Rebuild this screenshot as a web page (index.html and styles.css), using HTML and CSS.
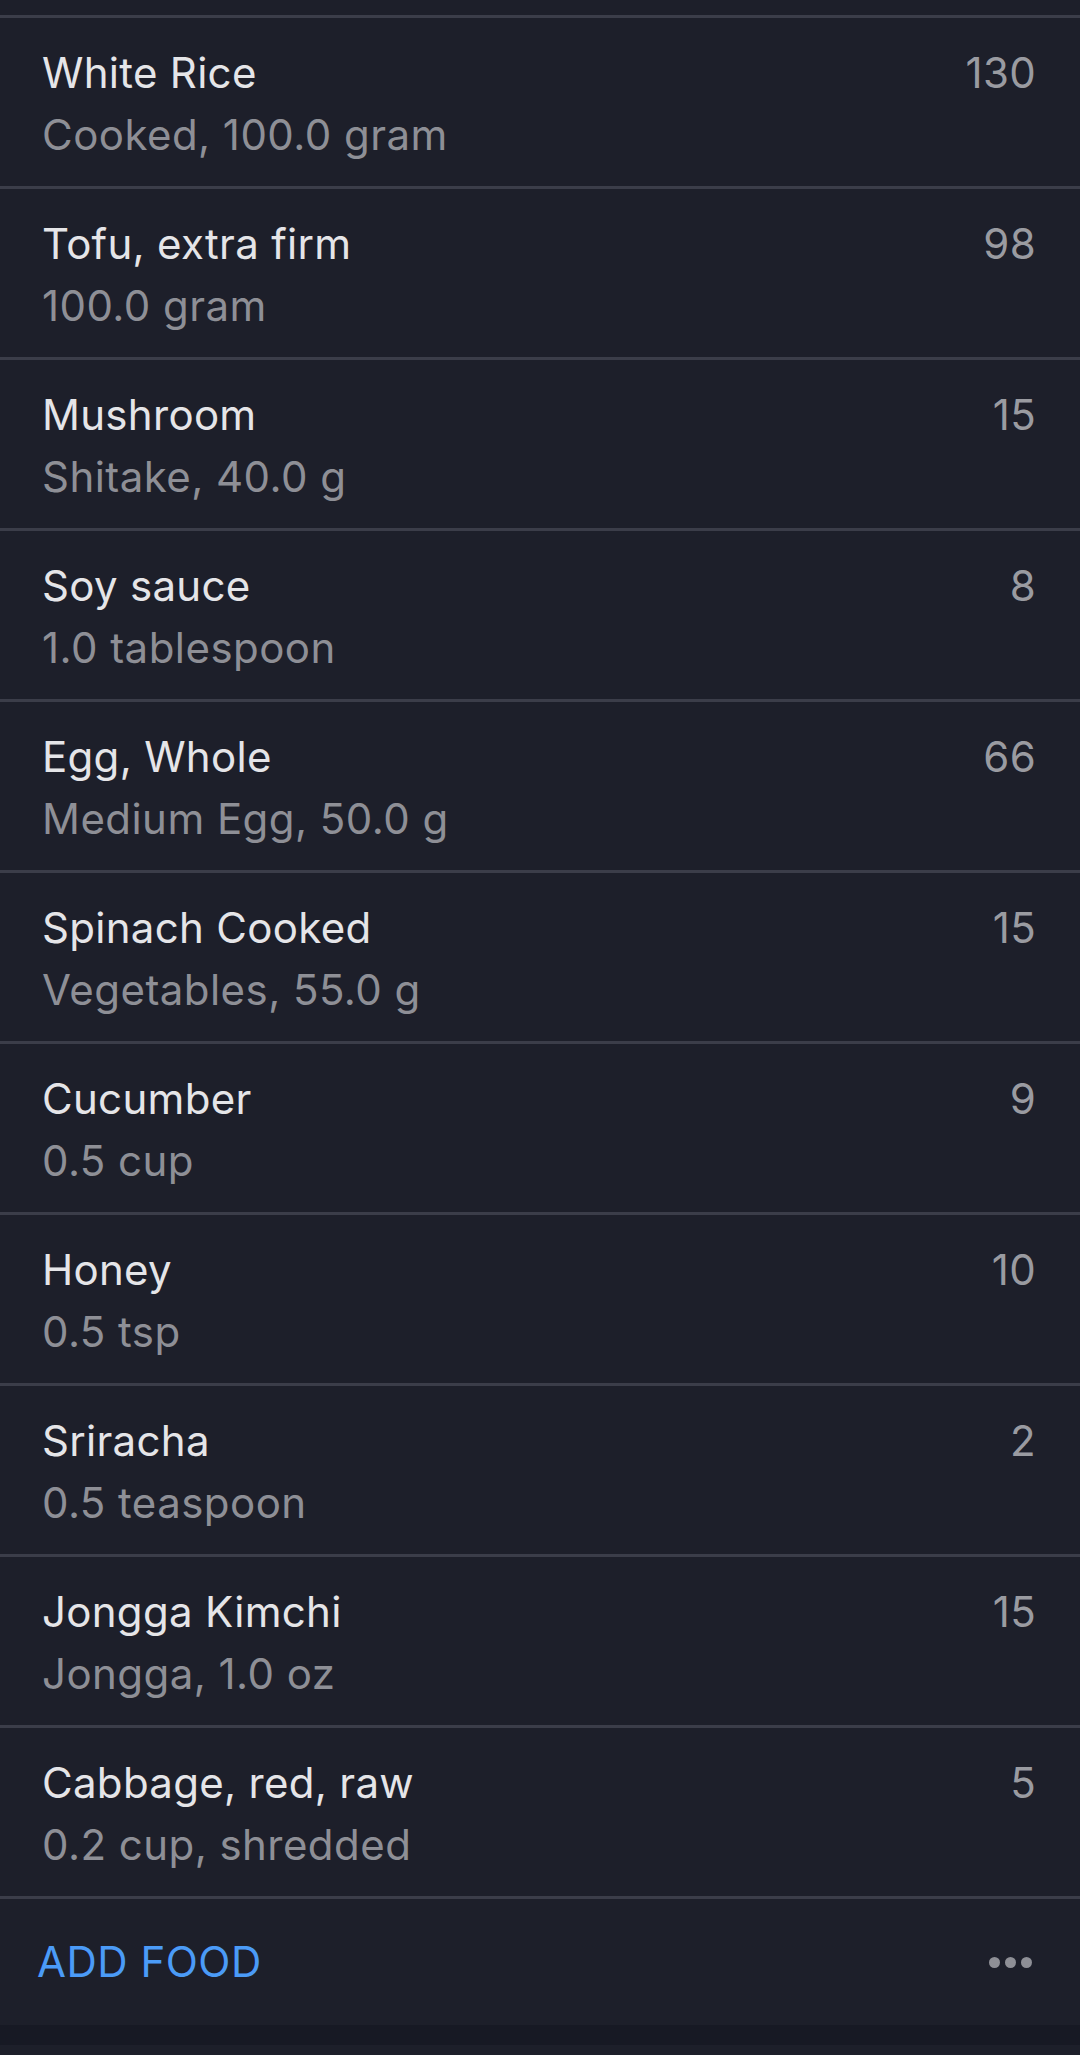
FILE: index.html
```html
<!DOCTYPE html>
<html lang="en">
<head>
<meta charset="utf-8">
<link rel="stylesheet" href="styles.css">
</head>
<body>
<div class="screen">
  <div class="top-space"></div>
  <ul class="food-list">
    <li class="food-row"><div class="food-info"><div class="food-name">White Rice</div><div class="food-detail">Cooked, 100.0 gram</div></div><div class="food-cal">130</div></li>
    <li class="food-row"><div class="food-info"><div class="food-name">Tofu, extra firm</div><div class="food-detail">100.0 gram</div></div><div class="food-cal">98</div></li>
    <li class="food-row"><div class="food-info"><div class="food-name">Mushroom</div><div class="food-detail">Shitake, 40.0 g</div></div><div class="food-cal">15</div></li>
    <li class="food-row"><div class="food-info"><div class="food-name">Soy sauce</div><div class="food-detail">1.0 tablespoon</div></div><div class="food-cal">8</div></li>
    <li class="food-row"><div class="food-info"><div class="food-name">Egg, Whole</div><div class="food-detail">Medium Egg, 50.0 g</div></div><div class="food-cal">66</div></li>
    <li class="food-row"><div class="food-info"><div class="food-name">Spinach Cooked</div><div class="food-detail">Vegetables, 55.0 g</div></div><div class="food-cal">15</div></li>
    <li class="food-row"><div class="food-info"><div class="food-name">Cucumber</div><div class="food-detail">0.5 cup</div></div><div class="food-cal">9</div></li>
    <li class="food-row"><div class="food-info"><div class="food-name">Honey</div><div class="food-detail">0.5 tsp</div></div><div class="food-cal">10</div></li>
    <li class="food-row"><div class="food-info"><div class="food-name">Sriracha</div><div class="food-detail">0.5 teaspoon</div></div><div class="food-cal">2</div></li>
    <li class="food-row"><div class="food-info"><div class="food-name">Jongga Kimchi</div><div class="food-detail">Jongga, 1.0 oz</div></div><div class="food-cal">15</div></li>
    <li class="food-row"><div class="food-info"><div class="food-name">Cabbage, red, raw</div><div class="food-detail">0.2 cup, shredded</div></div><div class="food-cal">5</div></li>
  </ul>
  <div class="footer">
    <span class="add-food">ADD FOOD</span>
    <span class="more" aria-label="More"><i></i><i></i><i></i></span>
  </div>
  <div class="band"></div>
</div>
</body>
</html>
```

FILE: styles.css
```css
* { box-sizing: border-box; }
html, body {
  margin: 0;
  padding: 0;
  background: #1d1f2a;
}
body {
  font-family: Inter, "Noto Sans", sans-serif;
  width: 1080px;
  height: 2055px;
  overflow: hidden;
}
.screen {
  display: flex;
  flex-direction: column;
}
.top-space { height: 15px; }
.food-list {
  list-style: none;
  margin: 0;
  padding: 0;
}
.food-row {
  display: flex;
  justify-content: space-between;
  align-items: flex-start;
  height: 171px;
  border-top: 3px solid #3b3d49;
  padding: 24px 44px 0 42px;
}
.food-name {
  font-size: 42px;
  line-height: 62px;
  letter-spacing: 0.3px;
  color: #e5e5e8;
}
.food-detail {
  font-size: 42px;
  line-height: 62px;
  letter-spacing: 0.45px;
  color: #8e8f96;
}
.food-cal {
  font-size: 42px;
  line-height: 62px;
  letter-spacing: 0.3px;
  color: #9a9ba1;
}
.footer {
  display: flex;
  align-items: center;
  justify-content: space-between;
  height: 129px;
  border-top: 3px solid #3b3d49;
  padding: 0 48px 0 37px;
}
.add-food {
  font-size: 42px;
  line-height: 62px;
  letter-spacing: 0.5px;
  color: #4b9bf7;
}
.more {
  display: flex;
  gap: 5px;
}
.more i {
  display: block;
  width: 11px;
  height: 11px;
  border-radius: 50%;
  background: #8e8f96;
}
.band {
  height: 20px;
  background: #171924;
}
```
